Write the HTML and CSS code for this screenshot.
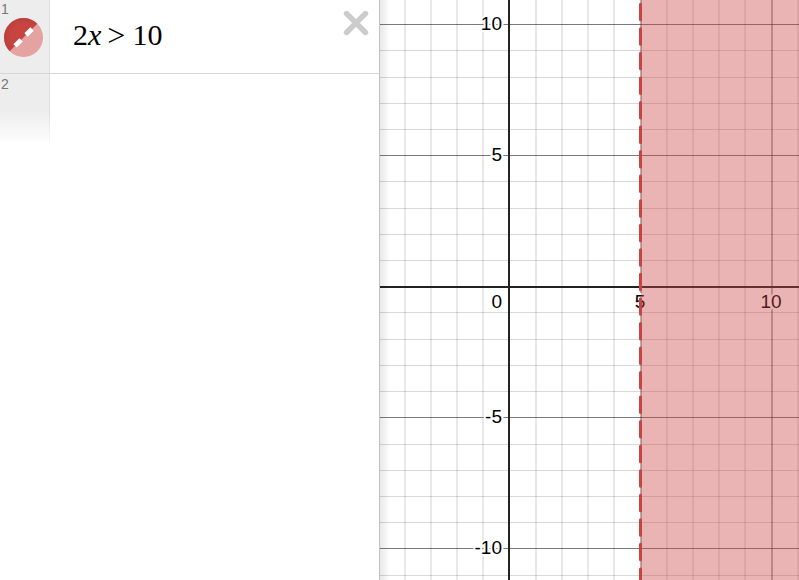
FILE: index.html
```
<!DOCTYPE html>
<html lang="en">
<head>
<meta charset="utf-8">
<title>Graphing Calculator</title>
<link rel="stylesheet" href="styles.css">
</head>
<body>
<main class="calculator">
  <section class="panel" aria-label="Expressions">
    <ol class="expressions">
      <li class="expression">
        <div class="tab">
          <span class="index">1</span>
          <button class="swatch" type="button" aria-label="Hide expression 1">
            <svg width="41" height="41" viewBox="0 0 41 41">
              <defs>
                <radialGradient id="shade" gradientUnits="userSpaceOnUse" cx="20.5" cy="20.5" r="19.5">
                  <stop offset="0.7" stop-color="#c74440"/>
                  <stop offset="1" stop-color="#b93f3b"/>
                </radialGradient>
              </defs>
              <circle cx="20.5" cy="20.5" r="19.5" fill="#e4a2a0"/>
              <path d="M6.7 34.3A19.5 19.5 0 0 1 34.3 6.7Z" fill="url(#shade)"/>
              <path d="M6.7 34.3L34.3 6.7" stroke="#fff" stroke-width="4.8" stroke-dasharray="0 7.6 8.5 7 8.5 20"/>
            </svg>
          </button>
        </div>
        <div class="math"><span>2</span><i>x</i><span class="relation">&gt;</span><span>10</span></div>
        <button class="close" type="button" aria-label="Delete expression 1">
          <svg width="26" height="26" viewBox="0 0 26 26"><path d="M3.5 3.5L22.5 22.5M22.5 3.5L3.5 22.5" stroke="#ccc" stroke-width="5.4" stroke-linecap="round"/></svg>
        </button>
      </li>
      <li class="expression blank">
        <div class="tab"><span class="index">2</span></div>
      </li>
    </ol>
  </section>
  <section class="graph" aria-label="Graph">
    <svg class="plot">
      <path class="minor-v" d="M25 0V2000M51 0V2000M77 0V2000M103 0V2000M156 0V2000M182 0V2000M208 0V2000M234 0V2000M287 0V2000M313 0V2000M339 0V2000M365 0V2000M418 0V2000"/>
      <path class="minor-h" d="M0 50.5H2000M0 77.5H2000M0 103.5H2000M0 129.5H2000M0 181.5H2000M0 208.5H2000M0 234.5H2000M0 260.5H2000M0 312.5H2000M0 339.5H2000M0 365.5H2000M0 391.5H2000M0 444.5H2000M0 470.5H2000M0 496.5H2000M0 522.5H2000M0 575.5H2000"/>
      <path class="major-v" d="M261 0V2000M392 0V2000"/>
      <path class="major-h" d="M0 24.5H2000M0 155.5H2000M0 417.5H2000M0 548.5H2000"/>
      <path class="axis" d="M129 0V2000M0 287H2000"/>
      <g class="labels">
        <text class="side" x="122" y="30">10</text>
        <text class="side" x="122" y="161">5</text>
        <text class="side" x="122" y="308">0</text>
        <text class="side" x="122" y="423">-5</text>
        <text class="side" x="122" y="554">-10</text>
        <text x="260" y="308">5</text>
        <text x="391" y="308">10</text>
      </g>
      <rect class="region" x="261" y="0" width="100%" height="100%"/>
      <path class="boundary" d="M260.5 -20.3V2000"/>
    </svg>
  </section>
</main>
</body>
</html>
```
FILE: styles.css
```
* { box-sizing: border-box; }
body {
  margin: 0;
  background: #fff;
  font-family: Arial, "Liberation Sans", sans-serif;
}
button {
  padding: 0;
  border: 0;
  background: none;
  cursor: pointer;
}
svg { display: block; }
.calculator {
  display: flex;
  height: 100vh;
  overflow: hidden;
}
.panel {
  flex: 0 0 380px;
  border-right: 1px solid #c4c4c4;
}
.expressions {
  margin: 0;
  padding: 0;
  list-style: none;
}
.expression {
  display: flex;
  min-height: 74px;
  border-bottom: 1px solid #d6d6d6;
}
.tab {
  flex: 0 0 50px;
  padding: 1px 0 0 1px;
  border-right: 1px solid #ddd;
  background: #ededed;
}
.index {
  display: block;
  color: #777;
  font-size: 14px;
  line-height: 16px;
}
.swatch { margin-left: 2px; }
.math {
  display: flex;
  flex: 1;
  padding: 18px 0 0 23px;
  font-family: "Liberation Serif", serif;
  font-size: 30px;
  line-height: 34px;
}
.relation {
  margin: 0 7px 0 6px;
  font-size: 32px;
}
.close {
  align-self: flex-start;
  margin: 10px 10px 0 0;
}
.blank { border-bottom: 0; }
.blank .tab {
  padding-top: 2px;
  border-right: 1px solid;
  border-image: linear-gradient(#ddd 50%, #fff) 1;
  background: linear-gradient(#ededed 50%, #fff 95%);
}
.graph {
  flex: 1;
  min-width: 0;
  position: relative;
}
.graph::before {
  content: "";
  position: absolute;
  inset: 0 auto 0 0;
  width: 10px;
  background: linear-gradient(to right, rgba(0, 0, 0, 0.09), rgba(0, 0, 0, 0));
}
.plot {
  width: 100%;
  height: 100%;
}
.plot path { fill: none; }
.minor-v { stroke: rgba(0, 0, 0, 0.09); stroke-width: 2; }
.minor-h { stroke: rgba(0, 0, 0, 0.15); }
.major-v { stroke: rgba(0, 0, 0, 0.3); stroke-width: 2; }
.major-h { stroke: rgba(0, 0, 0, 0.52); }
.plot .axis { stroke: #222; stroke-width: 2; }
.labels {
  fill: #000;
  stroke: #fff;
  stroke-width: 4px;
  stroke-linejoin: round;
  paint-order: stroke;
  font-size: 19px;
  text-anchor: middle;
}
.labels .side { text-anchor: end; }
.region { fill: #c74440; fill-opacity: 0.4; }
.plot .boundary {
  stroke: #c74440;
  stroke-width: 3;
  stroke-linecap: round;
  stroke-dasharray: 15.5 9.05;
}
```
